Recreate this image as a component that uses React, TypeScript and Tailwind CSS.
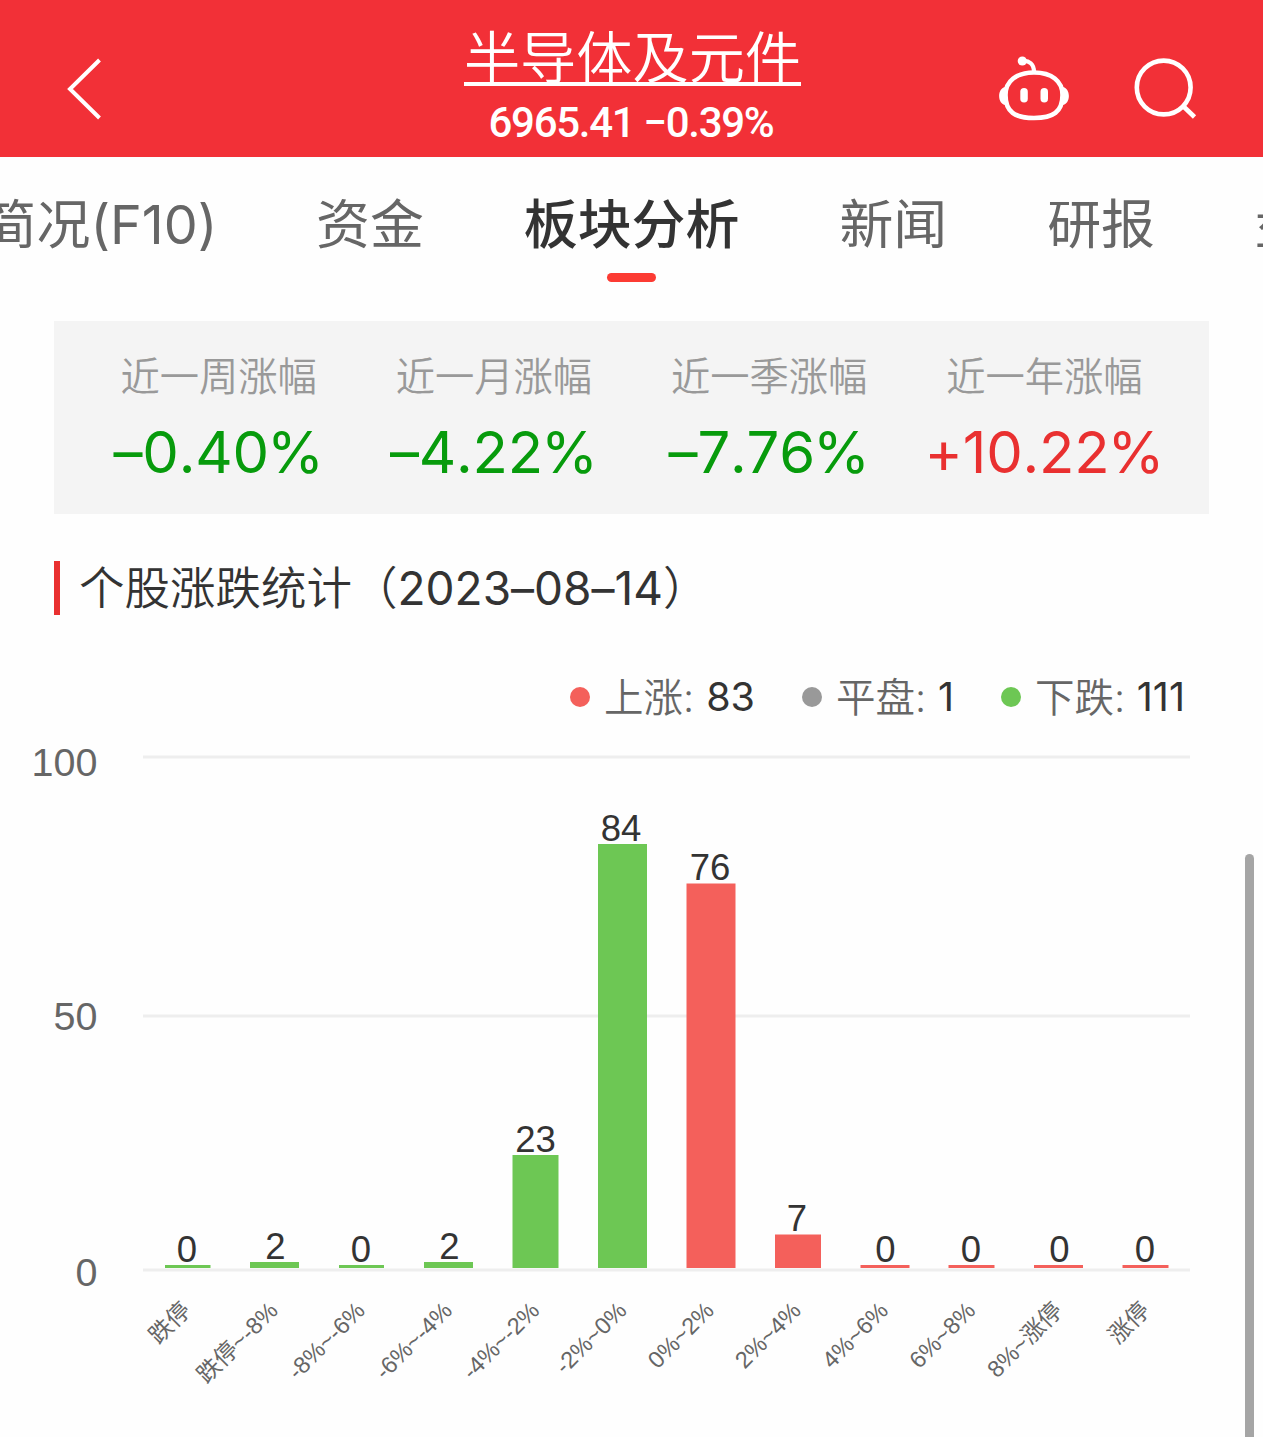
import React, { useState } from 'react';

interface Bar {
  label: string;
  value: number;
  x: number;
  width: number;
  top: number;
  center: number;
  up: boolean;
}

const tabs = ['简况(F10)', '资金', '板块分析', '新闻', '研报', '盘口'];

const periods = [
  { label: '近一周涨幅', value: '–0.40', up: false },
  { label: '近一月涨幅', value: '–4.22', up: false },
  { label: '近一季涨幅', value: '–7.76', up: false },
  { label: '近一年涨幅', value: '+10.22', up: true },
];

const legend = [
  { label: '上涨', value: 83, dot: 'bg-[#f4605b]', width: 'w-[185px]' },
  { label: '平盘', value: 1, dot: 'bg-[#999999]', width: 'w-[152px]' },
  { label: '下跌', value: 111, dot: 'bg-[#6dc754]', width: 'w-[184px]' },
];

const gridLines = [
  { label: '100', y: 57, textY: 76 },
  { label: '50', y: 316, textY: 330 },
  { label: '0', y: 570, textY: 586 },
];

const BASE = 568;

const bars: Bar[] = [
  { label: '跌停', value: 0, x: 165, width: 45.5, top: 565, center: 187, up: false },
  { label: '跌停~-8%', value: 2, x: 250, width: 49, top: 562, center: 275.5, up: false },
  { label: '-8%~-6%', value: 0, x: 339, width: 45, top: 565, center: 361, up: false },
  { label: '-6%~-4%', value: 2, x: 424, width: 49, top: 562, center: 449.5, up: false },
  { label: '-4%~-2%', value: 23, x: 512.5, width: 46, top: 455, center: 535.5, up: false },
  { label: '-2%~0%', value: 84, x: 598, width: 49, top: 144, center: 621, up: false },
  { label: '0%~2%', value: 76, x: 686.5, width: 49, top: 183.5, center: 710, up: true },
  { label: '2%~4%', value: 7, x: 775, width: 46, top: 534.5, center: 797, up: true },
  { label: '4%~6%', value: 0, x: 860.5, width: 49, top: 565, center: 885.5, up: true },
  { label: '6%~8%', value: 0, x: 948.5, width: 46, top: 565, center: 971, up: true },
  { label: '8%~涨停', value: 0, x: 1034, width: 49, top: 565, center: 1059.5, up: true },
  { label: '涨停', value: 0, x: 1122.5, width: 46, top: 565, center: 1145, up: true },
];

function BackIcon() {
  return (
    <svg width="40" height="68" viewBox="64 55 40 68" fill="none" stroke="white" strokeWidth="4">
      <path d="M99.5 60 70 89l29.500 29" />
    </svg>
  );
}

function RobotIcon() {
  return (
    <svg width="76" height="72" viewBox="996 53 76 72" fill="none" stroke="white" strokeWidth="4.600">
      <path d="M1023 61c6-.5 11 3 11 11" strokeWidth="4.200" />
      <circle cx="1022.300" cy="61" r="4.600" fill="white" stroke="none" />
      <path d="M1034 72.500c17.500 0 28.500 8.500 28.500 22.500 0 17-9.500 23-28.500 23s-28.500-6-28.500-23c0-14 11-22.500 28.500-22.500z" />
      <path d="M1005.500 87c-8.500 1-8.500 17 0 18zM1062.500 87c8.500 1 8.500 17 0 18z" fill="white" stroke="none" />
      <rect x="1020.300" y="88" width="7.500" height="14.500" rx="3.750" fill="white" stroke="none" />
      <rect x="1040.500" y="88" width="7.500" height="14.500" rx="3.750" fill="white" stroke="none" />
    </svg>
  );
}

function SearchIcon() {
  return (
    <svg width="68" height="68" viewBox="1131 55 68 68" fill="none" stroke="white" strokeWidth="4.600">
      <circle cx="1163.700" cy="87.500" r="26.900" />
      <path d="M1183 106l11.500 11" />
    </svg>
  );
}

function Header() {
  return (
    <header className="flex h-[157px] items-start justify-between bg-[#f23037] pl-16 pr-16 text-white">
      <button className="mt-[55px] w-[203px]"><BackIcon /></button>
      <div className="flex flex-col items-center pt-7 pl-0.5">
        <h1 className="h-[58px] border-b-4 border-white pt-0.5 text-[56.200px] leading-[56px] whitespace-nowrap font-[350]">半导体及元件</h1>
        <p className="mt-[13px] mr-[3px] font-['Roboto'] text-[42px] font-medium leading-[48px] tracking-[-1.300px] whitespace-nowrap">6965.41 −0.39%</p>
      </div>
      <div className="flex w-[203px] gap-[59px] pt-[53px]">
        <button><RobotIcon /></button>
        <button><SearchIcon /></button>
      </div>
    </header>
  );
}

function StatChart() {
  return (
    <svg className="block" width="1240" height="737" viewBox="0 0 1240 737" fontFamily="'Liberation Sans', 'Noto Sans CJK SC', sans-serif">
      {gridLines.map(g => (
        <g key={g.label}>
          <rect x="143" y={g.y - 1.5} width="1047" height="3" fill="#eeeeee" />
          <text x="97.500" y={g.textY} textAnchor="end" fontSize="39.500" fill="#666666">{g.label}</text>
        </g>
      ))}
      {bars.map((b, i) => (
        <g key={b.label}>
          <rect x={b.x} y={b.top} width={b.width} height={BASE - b.top} fill={b.up ? '#f4605b' : '#6dc754'} />
          <text x={b.center} y={b.top - 3.5} textAnchor="middle" fontSize="36.500" fill="#333333">{b.value}</text>
          <text transform={`translate(${192 + i * 87.2} 612) rotate(-45)`} textAnchor="end" fontSize="23.500" fill="#666666">{b.label}</text>
        </g>
      ))}
    </svg>
  );
}

export default function App() {
  const [activeTab, setActiveTab] = useState('板块分析');

  return (
    <div className="relative h-[1437px] w-[1263px] overflow-hidden bg-[#fefefe] font-['Inter','Noto_Sans_CJK_SC',sans-serif] text-[#333333] [font-feature-settings:'calt'_0]">
      <Header />

      <nav className="-ml-4 flex h-[164px] gap-[100px] pt-[33px]">
        {tabs.map(tab => (
          <button
            key={tab}
            onClick={() => setActiveTab(tab)}
            className={`flex shrink-0 flex-col items-center text-[53.900px] leading-[70px] whitespace-nowrap ${tab === '简况(F10)' ? 'w-[232px]' : ''} ${activeTab === tab ? 'font-medium text-[#333333]' : 'font-normal text-[#666666]'}`}
          >
            {tab}
            {activeTab === tab && <span className="mt-[13px] h-[9px] w-[49px] rounded-full bg-[#fc3b33]" />}
          </button>
        ))}
      </nav>

      <section className="mx-[54px] grid h-[193px] grid-cols-4 bg-[#f4f4f4] px-[27px] pt-[31px] text-center">
        {periods.map(p => (
          <div key={p.label}>
            <p className="text-[39.300px] font-[350] leading-[50px] text-[#999999]">{p.label}</p>
            <p className={`mt-[15px] text-[58px] leading-[70px] tracking-[-0.200px] whitespace-nowrap [font-kerning:none] ${p.up ? 'text-[#e93030]' : 'text-[#079b0c]'}`}>
              {p.value}<span className="-ml-0.5">%</span>
            </p>
          </div>
        ))}
      </section>

      <div className="mt-[47px] ml-[54px] flex h-[54px] items-center gap-[19px]">
        <span className="h-[54px] w-1.5 bg-[#e93030]" />
        <h2 className="text-[45.500px] font-[350] leading-[54px] whitespace-nowrap">
          个股涨跌统计（<span className="text-[46px] font-normal">2023–08–14</span>）
        </h2>
      </div>

      <div className="mt-[55px] ml-[570px] flex h-[54px] gap-[47px]">
        {legend.map(l => (
          <div key={l.label} className={`flex items-center whitespace-nowrap text-[39.500px] leading-[54px] ${l.width}`}>
            <span className={`mr-[14px] size-5 shrink-0 rounded-full ${l.dot}`} />
            <span className="pt-0.5 font-[350] text-[#666666]">{l.label}:</span>
            <span className="ml-auto">{l.value}</span>
          </div>
        ))}
      </div>

      <div className="-mt-6">
        <StatChart />
      </div>

      <div className="absolute top-[854px] right-[9px] h-[600px] w-[9px] rounded-full bg-[#a5a5a5]" />
    </div>
  );
}
